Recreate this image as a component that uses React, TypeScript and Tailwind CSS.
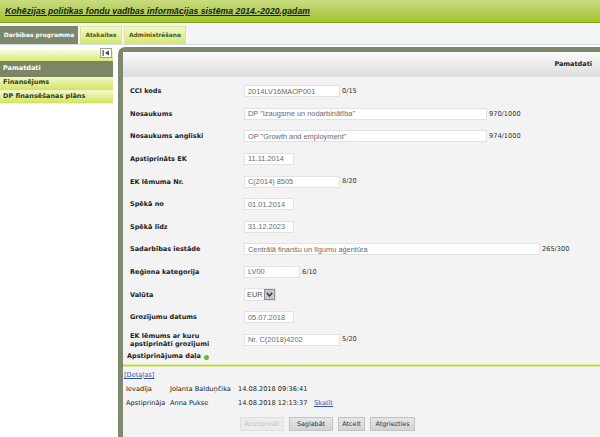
import type { ReactNode } from 'react';

const verdana = "font-['DejaVu_Sans',Verdana,sans-serif]";
const arial = "font-['Liberation_Sans',Arial,sans-serif]";

function Field({ value, w, counter }: { value: string; w: string; counter?: string }) {
  return (
    <div className="flex items-center">
      <div
        className={`${w} h-[12px] bg-white border border-[#e2e2e2] flex items-center pl-[3px] text-[7.4px] text-[#6a6a6a] ${arial} leading-none whitespace-nowrap overflow-hidden`}
      >
        {value}
      </div>
      {counter && <span className="ml-[2px] text-[6.6px] text-[#333] leading-none">{counter}</span>}
    </div>
  );
}

function Row({ label, children, h = 'h-[22.6px]' }: { label: ReactNode; children: ReactNode; h?: string }) {
  return (
    <div className={`flex items-center ${h}`}>
      <div className="w-[114px] text-[6.5px] font-bold text-[#222] leading-[8px]">{label}</div>
      {children}
    </div>
  );
}

function App() {
  const tabs = [
    { id: 'dp', label: 'Darbības programma', active: true, w: 'w-[78px]' },
    { id: 'at', label: 'Atskaites', active: false, w: 'w-[42px]' },
    { id: 'ad', label: 'Administrēšana', active: false, w: 'w-[62px]' },
  ];

  const menu = [
    { label: 'Pamatdati', active: true },
    { label: 'Finansējums', active: false },
    { label: 'DP finansēšanas plāns', active: false },
  ];

  return (
    <div className={`w-[600px] h-[437px] overflow-hidden bg-white flex flex-col ${verdana}`}>
      {/* virsraksts */}
      <header className="h-[23px] shrink-0 bg-gradient-to-b from-[#c8dc80] to-[#a2c31c] border-b border-[#84a02a] flex items-center pl-[5px]">
        <h1 className={`${arial} text-[8.6px] font-bold italic underline text-[#1a1a1a] tracking-[0.05px]`}>
          Kohēzijas politikas fondu vadības informācijas sistēma 2014.-2020.gadam
        </h1>
      </header>

      {/* cilnes */}
      <nav className="h-[22px] shrink-0 bg-[#f3f5f7] border-b border-[#d4dde6] flex items-end gap-[2px]">
        {tabs.map((t) => (
          <div
            key={t.id}
            className={`${t.w} h-[18px] flex items-center justify-center text-[5.9px] font-bold ${
              t.active
                ? 'bg-[#7c8869] text-white'
                : 'bg-gradient-to-b from-[#f4f8cc] to-[#d6e66a] text-[#4a5a1a] border border-b-0 border-[#d8e4a0]'
            }`}
          >
            {t.label}
          </div>
        ))}
      </nav>

      <div className="flex-1 flex pt-[2px] min-h-0">
        {/* kreisā izvēlne */}
        <aside className="w-[114px] shrink-0 pt-[3px] relative">
          <div className="h-[11px] bg-gradient-to-b from-[#f8fbdc] to-[#dbe96e] mr-[1px]" />
          <div className="absolute right-[2px] top-[1px] w-[12px] h-[10px] bg-white border border-[#9aa38c] flex items-center justify-center">
            <svg width="8" height="6" viewBox="0 0 8 6">
              <rect x="0.5" y="0" width="1.2" height="6" fill="#3c4a5a" />
              <path d="M7 0.5 L3 3 L7 5.5 Z" fill="#3c4a5a" />
            </svg>
          </div>
          {menu.map((m) => (
            <div
              key={m.label}
              className={`pl-[3px] flex items-center text-[6.5px] font-bold mr-[1px] ${
                m.active
                  ? 'h-[16px] bg-[#7b8667] text-white'
                  : 'h-[13.5px] bg-gradient-to-b from-[#f1f7c4] to-[#d5e45c] text-[#2e3a10] border-b border-[#eef4c8]'
              }`}
            >
              {m.label}
            </div>
          ))}
        </aside>

        {/* galvenais panelis */}
        <main className="ml-[4px] flex-1 flex flex-col bg-[#f3f3f3] border-l-[5px] border-t-[5px] border-[#7e8a70] rounded-tl-[7px] min-w-0">
          <div className="h-[25px] shrink-0 bg-gradient-to-b from-[#fbfbfb] to-[#dddddd] flex items-center justify-end pr-[8px] text-[6.5px] font-bold text-[#222]">
            Pamatdati
          </div>

          <div className="pl-[7px] pt-[3px]">
            <Row label="CCI kods">
              <Field value="2014LV16MAOP001" w="w-[96px]" counter="0/15" />
            </Row>
            <Row label="Nosaukums">
              <Field value='DP "Izaugsme un nodarbinātība"' w="w-[243px]" counter="970/1000" />
            </Row>
            <Row label="Nosaukums angliski">
              <Field value='OP "Growth and employment"' w="w-[243px]" counter="974/1000" />
            </Row>
            <Row label="Apstiprināts EK">
              <Field value="11.11.2014" w="w-[50px]" />
            </Row>
            <Row label="EK lēmuma Nr.">
              <Field value="C(2014) 8505" w="w-[96px]" counter="8/20" />
            </Row>
            <Row label="Spēkā no">
              <Field value="01.01.2014" w="w-[50px]" />
            </Row>
            <Row label="Spēkā līdz">
              <Field value="31.12.2023" w="w-[50px]" />
            </Row>
            <Row label="Sadarbības iestāde">
              <Field value="Centrālā finanšu un līgumu aģentūra" w="w-[296px]" counter="265/300" />
            </Row>
            <Row label="Reģiona kategorija">
              <Field value="LV00" w="w-[56px]" counter="6/10" />
            </Row>
            <Row label="Valūta">
              <div className="flex items-center h-[13px] bg-white border border-[#e2e2e2] pl-[2px]">
                <span className={`${arial} text-[7.4px] text-[#555] leading-none`}>EUR</span>
                <div className="ml-[1px] w-[11px] h-[11px] bg-[#c9c9c9] border border-[#8d8d8d] flex items-center justify-center">
                  <svg width="7" height="5" viewBox="0 0 7 5">
                    <path d="M0.8 0.8 L3.5 4 L6.2 0.8" fill="none" stroke="#333" strokeWidth="1.4" />
                  </svg>
                </div>
              </div>
            </Row>
            <Row label="Grozījumu datums">
              <Field value="05.07.2018" w="w-[50px]" />
            </Row>
            <Row
              h="h-[22px]"
              label={
                <>
                  EK lēmums ar kuru
                  <br />
                  apstiprināti grozījumi
                </>
              }
            >
              <Field value="Nr. C(2018)4202" w="w-[96px]" counter="5/20" />
            </Row>
            <div className="h-[13px] flex items-center text-[6.5px] font-bold text-[#222] -ml-[3px]">
              Apstiprinājuma daļa
              <span className="ml-[3px] w-[5px] h-[5px] rounded-full bg-[#6cb33a] inline-block" />
            </div>
          </div>

          <div className="h-[3px] bg-[#b9d33c] border-y border-[#dfeca0] shrink-0" />

          <div className="pl-[1px] pt-[4px] text-[6.6px] text-[#222]">
            <a className="text-[#2a56b8] underline">[Detaļas]</a>
            <table className="mt-[2px] border-collapse">
              <tbody>
                <tr className="h-[14.5px]">
                  <td className="pl-[2px] w-[46px]">Ievadīja</td>
                  <td className="w-[68px]">Jolanta Balduņčika</td>
                  <td className="w-[76px]">14.08.2018 09:36:41</td>
                  <td />
                </tr>
                <tr className="h-[14.5px]">
                  <td className="pl-[2px]">Apstiprināja</td>
                  <td>Anna Pukse</td>
                  <td>14.08.2018 12:13:37</td>
                  <td>
                    <a className="text-[#2a56b8] underline">Skatīt</a>
                  </td>
                </tr>
              </tbody>
            </table>
          </div>

          <div className="flex justify-center gap-[5px] mt-[6px] pr-[68px] text-[6.4px]">
            <button className="h-[14px] w-[44px] bg-[#ececec] border border-[#e0e0e0] text-[#c4c4c4]">Apstiprināt</button>
            <button className="h-[14px] w-[44px] bg-gradient-to-b from-[#e6e6e6] to-[#d4d4d4] border border-[#c2c2c2] text-[#333]">Saglabāt</button>
            <button className="h-[14px] w-[27px] bg-gradient-to-b from-[#e6e6e6] to-[#d4d4d4] border border-[#c2c2c2] text-[#333]">Atcelt</button>
            <button className="h-[14px] w-[45px] bg-gradient-to-b from-[#e6e6e6] to-[#d4d4d4] border border-[#c2c2c2] text-[#333]">Atgriezties</button>
          </div>
        </main>
      </div>
    </div>
  );
}

export default App;
